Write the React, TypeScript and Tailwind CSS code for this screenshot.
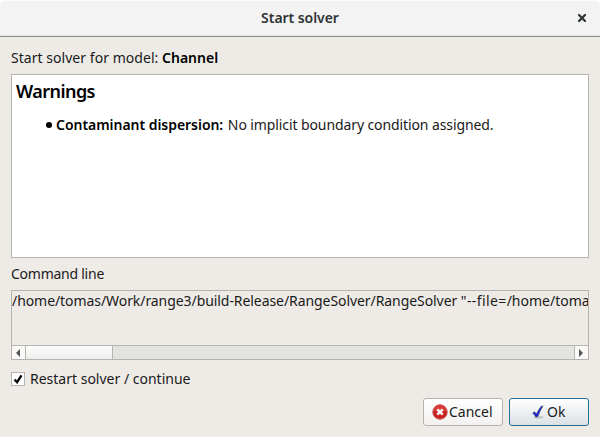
import type { ReactNode } from "react";

function TitleBar() {
  return (
    <header className="relative flex h-[37px] shrink-0 items-center justify-center rounded-t-[6px] border-t border-b border-t-[#fbfbfb] border-b-[#8b8e8b] bg-[#f3f3f3] pb-px shadow-[inset_0_-1px_0_#e4e4e3]">
      <h1 className="text-[14px] font-semibold leading-5 tracking-[-0.05px] text-[#2e3436]">Start solver</h1>
      <button aria-label="Close" className="absolute top-[13px] right-[14px]">
        <svg width="8" height="8" viewBox="0 0 8 8" className="block">
          <path d="M1 1 7 7M7 1 1 7" stroke="#2e3436" strokeWidth="2.2" strokeLinecap="square" />
        </svg>
      </button>
    </header>
  );
}

function PushButton({ className, children }: { className: string; children: ReactNode }) {
  return (
    <button className={`flex h-7 w-20 items-center rounded-[3px] border text-[14px] leading-5 ${className}`}>
      {children}
    </button>
  );
}

function ScrollBar() {
  return (
    <div className="flex h-[14px] border-t border-[#b6b4b0] bg-[#e3e3df]">
      <div className="flex w-[14px] items-center justify-center border-r border-[#b6b4b0] bg-[#f9f9f8] pr-px">
        <svg width="4" height="8" viewBox="0 0 4 8"><path d="M4 0v8L0 4z" fill="#555" /></svg>
      </div>
      <div className="w-[87px] border-r border-[#b6b4b0] bg-linear-to-b from-[#fcfcfc] to-[#efeeed]" />
      <div className="ml-auto flex w-[14px] items-center justify-center border-l border-[#b6b4b0] bg-[#f9f9f8] pr-px">
        <svg width="4" height="8" viewBox="0 0 4 8"><path d="M0 0v8l4-4z" fill="#555" /></svg>
      </div>
    </div>
  );
}

export default function App() {
  return (
    <div className="h-[437px] w-[600px] overflow-hidden bg-white">
      <div className="flex h-full flex-col rounded-t-[6px] bg-[#eeebe7] font-['Noto_Sans',sans-serif] text-[14px] leading-5 text-[#1a1a1a]">
        <TitleBar />
        <main className="flex flex-col px-[11px] pt-[11px]">
          <p className="h-[26px] whitespace-pre">
            <span className="tracking-[0.04px]">Start solver for model: </span>
            <b className="font-semibold text-black">Channel</b>
          </p>
          <section className="h-[184px] border border-[#b6b4b0] bg-white px-1 pt-[3px]">
            <h2 className="text-[18px] font-semibold leading-[26px] tracking-[-0.55px] text-black">Warnings</h2>
            <div className="mt-[11px] flex items-center whitespace-pre pl-[30px]">
              <span className="mr-[4px] size-[6px] rounded-full bg-black" />
              <b className="font-semibold tracking-[-0.04px] text-black">Contaminant dispersion:</b>
              <span className="tracking-[-0.1px]"><span className="tracking-[1px]"> </span>No implicit boundary condition assigned.</span>
            </div>
          </section>
          <h3 className="mt-[6px] h-[26px] tracking-[-0.25px]">Command line</h3>
          <section className="flex h-[70px] flex-col justify-between overflow-hidden border border-[#b6b4b0]">
            <p className="overflow-hidden whitespace-pre">
              <span className="tracking-[-0.07px]">/home/tomas/Work/range3/build-Release/RangeSolver/RangeSolver </span>
              <span className="tracking-[0.4px]">"--file=</span>
              <span>/home/tomas</span>
            </p>
            <ScrollBar />
          </section>
          <label className="mt-[9px] flex h-5 items-center">
            <span className="mr-[5px] flex size-[14px] items-center justify-center border border-[#b6b4b0] bg-white">
              <svg width="10" height="10" viewBox="0 0 10 10"><path d="M1.5 5.5 4 8.2 8.5 1.3" fill="none" stroke="#000" strokeWidth="2.3" /></svg>
            </span>
            <span>Restart solver / continue</span>
          </label>
          <footer className="mt-[9px] flex justify-end gap-[6px]">
            <PushButton className="border-[#b6b4b0] bg-linear-to-b from-white to-[#f2f1f0] pl-[8px]">
              <svg width="16" height="16" viewBox="0 0 16 16" className="mr-px">
                <circle cx="8" cy="8" r="7.2" fill="#c9201f" stroke="#c95050" />
                <path d="M1.2 7A6.9 6.9 0 0 1 14.8 7Q8 9 1.2 7" fill="#df5552" opacity=".5" />
                <path d="m5.3 5.3 5.4 5.4m0-5.4-5.4 5.4" stroke="#fff" strokeWidth="2.4" />
              </svg>
              <span>Cancel</span>
            </PushButton>
            <PushButton className="border-[#256f9b] bg-linear-to-b from-white to-[#dbe1e5] pl-[20px]">
              <svg width="16" height="16" viewBox="0 0 16 16" className="mr-px">
                <ellipse cx="8.5" cy="13.2" rx="5" ry="1.3" fill="#9ba09e" opacity=".5" />
                <path d="m2.6 9 1.9-1.2 2 2.2Q8.6 5.5 11 2.4l2-.5Q9.8 6.8 7.8 12.6l-1.9.6Q4.8 10.8 2.6 9z" fill="#1717ed" stroke="#4a6068" strokeWidth=".8" strokeLinejoin="round" />
              </svg>
              <span>Ok</span>
            </PushButton>
          </footer>
        </main>
      </div>
    </div>
  );
}
